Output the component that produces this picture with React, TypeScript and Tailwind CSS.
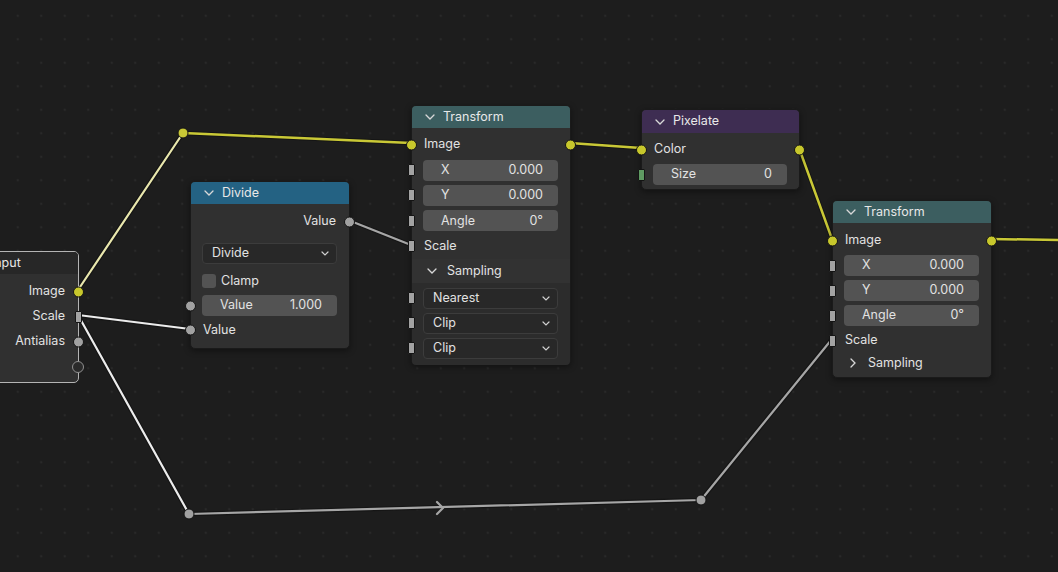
import React from 'react'

type Kind = 'yellow' | 'grey' | 'vector' | 'int' | 'empty'

function Socket({ side, kind }: { side: 'in' | 'out'; kind: Kind }) {
  const pos = side === 'in' ? 'left-[-6px]' : 'right-[-6px]'
  if (kind === 'vector' || kind === 'int') {
    const col = kind === 'vector' ? 'bg-[#a3a3a3]' : 'bg-[#5f9a62]'
    const p = side === 'in' ? 'left-[-4px]' : 'right-[-4px]'
    return <div className={`absolute ${p} top-1/2 -translate-y-1/2 w-[7px] h-[12px] rounded-[1px] border border-[#141414] ${col}`} />
  }
  if (kind === 'empty') {
    return <div className={`absolute ${pos} top-1/2 -translate-y-1/2 w-[12px] h-[12px] rounded-full border-[1.5px] border-[#8f8f8f] bg-[#2a2a2a]`} />
  }
  const col = kind === 'yellow' ? 'bg-[#c7c72c]' : 'bg-[#a1a1a1]'
  return <div className={`absolute ${pos} top-1/2 -translate-y-1/2 w-[11px] h-[11px] rounded-full border border-[#141414] ${col}`} />
}

function Chevron({ open = true }: { open?: boolean }) {
  return open ? (
    <svg width="10" height="6" viewBox="0 0 10 6" className="shrink-0">
      <path d="M1 1 L5 5 L9 1" fill="none" stroke="#d8d8d8" strokeWidth="1.3" strokeLinecap="round" />
    </svg>
  ) : (
    <svg width="6" height="10" viewBox="0 0 6 10" className="shrink-0">
      <path d="M1 1 L5 5 L1 9" fill="none" stroke="#d8d8d8" strokeWidth="1.3" strokeLinecap="round" />
    </svg>
  )
}

function Header({ title, color }: { title: string; color: string }) {
  return (
    <div className={`h-[22px] flex items-center gap-[8px] pl-[13px] rounded-t-[4px] ${color} text-[#e8e8e8]`}>
      <Chevron />
      <span>{title}</span>
    </div>
  )
}

function Field({ label, value, sock, h = 'h-[25px]' }: { label: string; value: string; sock?: Kind; h?: string }) {
  return (
    <div className={`relative ${h} flex items-center`}>
      {sock && <Socket side="in" kind={sock} />}
      <div className="ml-[11px] mr-[12px] flex-1 h-[21px] rounded-[4px] bg-[#535353] flex items-center justify-between pl-[18px] pr-[15px] text-[#e2e2e2]">
        <span>{label}</span>
        <span>{value}</span>
      </div>
    </div>
  )
}

function Dropdown({ label, sock }: { label: string; sock?: Kind }) {
  return (
    <div className="relative h-[25px] flex items-center">
      {sock && <Socket side="in" kind={sock} />}
      <div className="ml-[11px] mr-[12px] flex-1 h-[21px] rounded-[4px] bg-[#282828] border border-[#3c3c3c] flex items-center justify-between pl-[9px] pr-[7px] text-[#e2e2e2]">
        <span>{label}</span>
        <svg width="8" height="5" viewBox="0 0 8 5">
          <path d="M1 1 L4 4 L7 1" fill="none" stroke="#d0d0d0" strokeWidth="1.2" strokeLinecap="round" />
        </svg>
      </div>
    </div>
  )
}

function InRow({ label, kind, h = 'h-[25px]' }: { label: string; kind: Kind; h?: string }) {
  return (
    <div className={`relative ${h} flex items-center pl-[12px] text-[#e2e2e2]`}>
      <Socket side="in" kind={kind} />
      <span>{label}</span>
    </div>
  )
}

function IoRow({ label, kind, h = 'h-[25px]' }: { label: string; kind: Kind; h?: string }) {
  return (
    <div className={`relative ${h} flex items-center pl-[12px] text-[#e2e2e2]`}>
      <Socket side="in" kind={kind} />
      <span>{label}</span>
      <Socket side="out" kind={kind} />
    </div>
  )
}

function OutRow({ label, kind }: { label: string; kind: Kind }) {
  return (
    <div className="relative h-[25px] flex items-center justify-end pr-[13px] text-[#e2e2e2]">
      <span>{label}</span>
      <Socket side="out" kind={kind} />
    </div>
  )
}

function Wires() {
  return (
    <svg className="absolute inset-0" width="1058" height="572" viewBox="0 0 1058 572">
      <g fill="none" strokeLinecap="round" strokeLinejoin="round">
        <g stroke="#111" strokeWidth="4.5" opacity="0.6">
          <path d="M78 290 L183 133 L411 143" />
          <path d="M570 143 L641 148" />
          <path d="M799 148 L832 239" />
          <path d="M991 239 L1060 240" />
          <path d="M78 315 L190 329" />
          <path d="M78 315 L189 514 L701 500 L832 339" />
          <path d="M348 220 L411 245" />
        </g>
        <path d="M78 290 L183 133" stroke="#e9e7ad" strokeWidth="2.2" />
        <path d="M183 133 L411 143" stroke="#c9c836" strokeWidth="2.5" />
        <path d="M570 143 L641 148" stroke="#c9c836" strokeWidth="2.5" />
        <path d="M799 148 L832 239" stroke="#c9c836" strokeWidth="2.5" />
        <path d="M991 239 L1060 240" stroke="#c9c836" strokeWidth="2.5" />
        <path d="M78 315 L190 329" stroke="#ececec" strokeWidth="2.2" />
        <path d="M78 315 L189 514" stroke="#ececec" strokeWidth="2.2" />
        <path d="M189 514 L701 500 L832 339" stroke="#a6a6a6" strokeWidth="2.2" />
        <path d="M348 220 L411 245" stroke="#a6a6a6" strokeWidth="2.2" />
        <path d="M437 502 L443 508 L437 514" stroke="#a6a6a6" strokeWidth="2.2" />
      </g>
      <circle cx="183" cy="133" r="5" fill="#c9c836" stroke="#141414" strokeWidth="1" />
      <circle cx="189" cy="514" r="5" fill="#a1a1a1" stroke="#141414" strokeWidth="1" />
      <circle cx="701" cy="500" r="5" fill="#a1a1a1" stroke="#141414" strokeWidth="1" />
    </svg>
  )
}

export default function App() {
  return (
    <div className="relative w-[1058px] h-[572px] overflow-hidden bg-[#1d1d1d] bg-[radial-gradient(circle,#292929_1px,transparent_1.6px)] [background-size:23.5px_23.5px] [background-position:6px_4px] font-[Inter,'Liberation_Sans',sans-serif] text-[12.5px] leading-none">
      <Wires />

      {/* Group Input, mostly off the left edge */}
      <div className="absolute left-[-100px] top-[251px] w-[179px] h-[132px] rounded-[5px] bg-[#303030] border border-[#b4b4b4]">
        <div className="h-[22px] flex items-center pl-[50px] rounded-t-[4px] bg-[#272727] text-[#e8e8e8]">
          <span>Group Input</span>
        </div>
        <div className="pt-[5px]">
          <OutRow label="Image" kind="yellow" />
          <OutRow label="Scale" kind="vector" />
          <OutRow label="Antialias" kind="grey" />
          <OutRow label="" kind="empty" />
        </div>
      </div>

      {/* Divide */}
      <div className="absolute left-[190px] top-[181px] w-[160px] h-[168px] rounded-[5px] bg-[#303030] border border-[#1a1a1a] shadow-[0_2px_6px_rgba(0,0,0,0.4)]">
        <Header title="Divide" color="bg-[#246283]" />
        <div className="pt-[5px]">
          <OutRow label="Value" kind="grey" />
          <div className="pt-[7px]">
            <Dropdown label="Divide" />
          </div>
          <div className="relative h-[27px] flex items-center pl-[11px] gap-[5px] text-[#e2e2e2] pt-[3px]">
            <div className="w-[14px] h-[14px] rounded-[3px] bg-[#535353]" />
            <span>Clamp</span>
          </div>
          <Field label="Value" value="1.000" sock="grey" />
          <InRow label="Value" kind="grey" h="h-[24px]" />
        </div>
      </div>

      {/* Transform 1 */}
      <div className="absolute left-[411px] top-[105px] w-[160px] h-[260px] rounded-[5px] bg-[#303030] border border-[#1a1a1a] shadow-[0_2px_6px_rgba(0,0,0,0.4)]">
        <Header title="Transform" color="bg-[#3c5e60]" />
        <div className="pt-[4px]">
          <IoRow label="Image" kind="yellow" h="h-[25.4px]" />
          <Field label="X" value="0.000" sock="vector" h="h-[25.4px]" />
          <Field label="Y" value="0.000" sock="vector" h="h-[25.4px]" />
          <Field label="Angle" value="0°" sock="vector" h="h-[25.4px]" />
          <InRow label="Scale" kind="vector" h="h-[25.4px]" />
          <div className="h-[24px] flex items-center gap-[10px] pl-[15px] text-[#e2e2e2] bg-[#323232]">
            <Chevron />
            <span>Sampling</span>
          </div>
          <div className="bg-[#2c2c2c] pt-[3px] pb-[4px] rounded-b-[4px]">
            <Dropdown label="Nearest" sock="vector" />
            <Dropdown label="Clip" sock="vector" />
            <Dropdown label="Clip" sock="vector" />
          </div>
        </div>
      </div>

      {/* Pixelate */}
      <div className="absolute left-[641px] top-[109px] w-[159px] h-[81px] rounded-[5px] bg-[#303030] border border-[#1a1a1a] shadow-[0_2px_6px_rgba(0,0,0,0.4)]">
        <div className="h-[23px] flex items-center gap-[8px] pl-[13px] rounded-t-[4px] bg-[#3e2d52] text-[#e8e8e8]">
          <Chevron />
          <span>Pixelate</span>
        </div>
        <div className="pt-[4px]">
          <IoRow label="Color" kind="yellow" />
          <Field label="Size" value="0" sock="int" />
        </div>
      </div>

      {/* Transform 2 */}
      <div className="absolute left-[832px] top-[200px] w-[160px] h-[178px] rounded-[5px] bg-[#303030] border border-[#1a1a1a] shadow-[0_2px_6px_rgba(0,0,0,0.4)]">
        <Header title="Transform" color="bg-[#3c5e60]" />
        <div className="pt-[5px]">
          <IoRow label="Image" kind="yellow" />
          <Field label="X" value="0.000" sock="vector" />
          <Field label="Y" value="0.000" sock="vector" />
          <Field label="Angle" value="0°" sock="vector" />
          <InRow label="Scale" kind="vector" />
          <div className="h-[20px] flex items-center gap-[12px] pl-[17px] text-[#e2e2e2]">
            <Chevron open={false} />
            <span>Sampling</span>
          </div>
        </div>
      </div>
    </div>
  )
}
